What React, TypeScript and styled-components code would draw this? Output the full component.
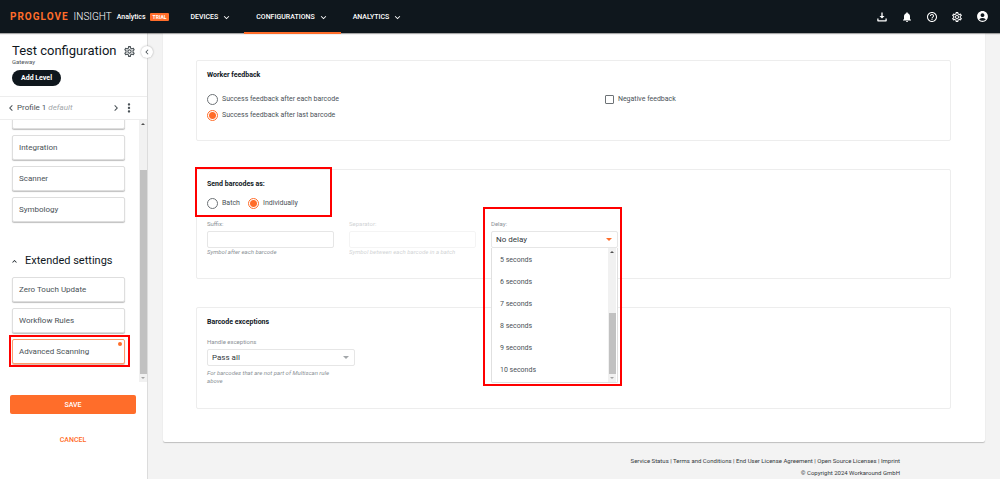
import React from 'react';
import styled, { createGlobalStyle, css } from 'styled-components';
import {
  MdAccountCircle,
  MdChevronLeft,
  MdChevronRight,
  MdExpandLess,
  MdExpandMore,
  MdHelpOutline,
  MdMoreVert,
  MdNotifications,
  MdOutlineSettings,
} from 'react-icons/md';

const ink = '#0f171d';
const text = '#4a5257';
const muted = '#8b9196';
const line = '#ededed';
const orange = '#ff6d2a';

const GlobalStyle = createGlobalStyle`
  *, *::before, *::after { box-sizing: border-box; }
  body {
    margin: 0;
    background: #f3f3f3;
    color: ${text};
    font-family: Roboto, "Liberation Sans", sans-serif;
    font-size: 7px;
    line-height: 8px;
  }
  button, input, select { font: inherit; color: inherit; margin: 0; padding: 0; border: 0; background: none; }
  h1, h2, h3, p, ul { margin: 0; padding: 0; }
  ul { list-style: none; }
  a { color: inherit; text-decoration: none; }
  svg { display: block; flex: none; }
`;

const Page = styled.div`
  display: flex;
  flex-direction: column;
  height: 100vh;
  overflow: hidden;
`;

const TopBar = styled.header`
  position: relative;
  z-index: 2;
  display: flex;
  align-items: center;
  flex: none;
  height: 33px;
  padding: 0 11px 0 10px;
  background: ${ink};
  color: #fff;
  box-shadow: 0 1px 1px rgba(0, 0, 0, 0.35);
`;

const Brand = styled.a`
  display: flex;
  align-items: center;
  font-size: 10px;
  line-height: 12px;
  font-weight: 300;
`;

const BrandName = styled.span`
  color: ${orange};
  font-weight: 700;
  letter-spacing: 1px;
  margin-right: 5px;
`;

const BrandSub = styled.span`
  font-size: 7px;
  font-weight: 500;
  margin-left: 5px;
`;

const Badge = styled.span`
  margin-left: 4px;
  padding: 0 3px;
  border-radius: 1px;
  background: ${orange};
  font-size: 5px;
  font-weight: 700;
  line-height: 8px;
`;

const Nav = styled.nav`
  display: flex;
  align-self: flex-start;
  flex: 1;
  margin-left: 9px;
`;

const NavItem = styled.button<{ $active?: boolean }>`
  display: flex;
  align-items: center;
  gap: 3px;
  height: 34px;
  padding: 0 12px;
  border-top: 2px solid transparent;
  border-bottom: 2px solid ${(p) => (p.$active ? orange : 'transparent')};
  font-weight: 500;
`;

const Tools = styled.div`
  display: flex;
  gap: 13px;
`;

const IconButton = styled.button`
  display: flex;
  align-items: center;
  justify-content: center;
`;

const Body = styled.div`
  display: flex;
  flex: 1;
  min-height: 0;
`;

const Sidebar = styled.aside`
  position: relative;
  display: flex;
  flex-direction: column;
  flex: none;
  width: 148px;
  background: #fff;
  border-right: 1px solid #dcdcdc;
`;

const Collapse = styled.button`
  position: absolute;
  top: 13px;
  right: -6px;
  display: flex;
  align-items: center;
  justify-content: center;
  width: 12px;
  height: 12px;
  border-radius: 50%;
  background: #fff;
  box-shadow: 0 0 2px rgba(0, 0, 0, 0.35);
`;

const SideHead = styled.div`
  height: 64px;
  padding: 11px 11px 0 12px;
  border-bottom: 1px solid ${line};
`;

const TitleRow = styled.div`
  display: flex;
  align-items: center;
  justify-content: space-between;
`;

const Title = styled.h1`
  color: ${ink};
  font-size: 13px;
  line-height: 14px;
  font-weight: 400;
`;

const Subtitle = styled.p`
  font-size: 6px;
`;

const Pill = styled.button`
  display: block;
  height: 16px;
  margin-top: 4px;
  padding: 0 9px;
  border-radius: 8px;
  background: ${ink};
  color: #fff;
  font-weight: 700;
`;

const ProfileRow = styled.div`
  display: flex;
  align-items: center;
  height: 23px;
  padding: 0 11px 0 5px;
  border-bottom: 1px solid ${line};
  font-size: 8px;
`;

const ProfileName = styled.span`
  flex: 1;

  em { color: #a3a7aa; }
`;

const ScrollArea = styled.div`
  display: flex;
  flex: 1;
  min-height: 0;
  overflow: hidden;
`;

const SideList = styled.div`
  display: flex;
  flex: 1;
  flex-direction: column;
  justify-content: flex-end;
  gap: 6px;
  padding: 0 14px 18px 12px;
`;

const Tile = styled.button<{ $active?: boolean }>`
  position: relative;
  flex: none;
  height: 25px;
  padding: 0 6px;
  border: 1px solid ${(p) => (p.$active ? '#ff9a6c' : '#dedede')};
  border-radius: 2px;
  background: #fff;
  box-shadow: 0 1px 1px ${(p) => (p.$active ? 'rgba(160, 80, 40, 0.4)' : 'rgba(0, 0, 0, 0.25)')};
  font-size: 8px;
  text-align: left;
`;

const Dot = styled.span`
  position: absolute;
  top: 2px;
  right: 2px;
  width: 4px;
  height: 4px;
  border-radius: 50%;
  background: ${orange};
`;

const GroupToggle = styled.button`
  display: flex;
  align-items: center;
  gap: 6px;
  flex: none;
  margin: 26px 0 3px -2px;
  color: ${ink};
  font-size: 11px;
  line-height: 14px;
`;

const Marked = styled.div<{ $inset: string; $fit?: boolean }>`
  position: relative;
  width: ${(p) => (p.$fit ? 'fit-content' : 'auto')};

  &::after {
    content: '';
    position: absolute;
    inset: ${(p) => p.$inset};
    border: 2px solid #f00;
    pointer-events: none;
    z-index: 3;
  }

  > ${Tile} { display: block; width: 100%; }
`;

const Track = styled.div`
  display: flex;
  flex-direction: column;
  flex: none;
  width: 8px;
  padding: 3px 0;
  background: #f1f1f1;
  align-items: center;
`;

const Thumb = styled.span<{ $size: number }>`
  flex: ${(p) => p.$size} 0 0;
  width: 7px;
  background: #c1c1c1;
`;

const Space = styled.span<{ $grow: number }>`
  flex: ${(p) => p.$grow} 0 0;
`;

const Actions = styled.div`
  display: flex;
  flex-direction: column;
  flex: none;
  gap: 16px;
  height: 97px;
  padding: 13px 11px 0 10px;
`;

const ActionButton = styled.button<{ $primary?: boolean }>`
  height: 19px;
  border-radius: 2px;
  font-weight: 500;
  color: ${(p) => (p.$primary ? '#fff' : orange)};
  background: ${(p) => (p.$primary ? orange : 'transparent')};
`;

const Main = styled.main`
  flex: 1;
  min-width: 0;
  padding: 0 15px;
`;

const Sheet = styled.div`
  display: flex;
  flex-direction: column;
  gap: 28px;
  padding: 27px 34px 33px 33px;
  background: #fff;
  border-radius: 0 0 2px 2px;
  box-shadow: 0 1px 1px rgba(0, 0, 0, 0.22);
`;

const Section = styled.section<{ $height: number }>`
  min-height: ${(p) => p.$height}px;
  padding: 9px 10px;
  border: 1px solid ${line};
  border-radius: 2px;
`;

const SectionTitle = styled.h2`
  color: ${ink};
  font-size: 7px;
  line-height: 10px;
  font-weight: 700;
`;

const Split = styled.div`
  display: grid;
  grid-template-columns: 19fr 16fr;
  align-items: start;
  margin-top: 13px;
`;

const Choices = styled.div<{ $row?: boolean }>`
  display: flex;
  flex-direction: ${(p) => (p.$row ? 'row' : 'column')};
  gap: ${(p) => (p.$row ? 8 : 4)}px;
  margin-top: ${(p) => (p.$row ? 8 : 0)}px;
`;

const Choice = styled.label`
  display: flex;
  align-items: center;
  gap: 4px;
  height: 12px;
`;

const Radio = styled.input.attrs({ type: 'radio' })`
  appearance: none;
  width: 11px;
  height: 11px;
  border: 1px solid #6d7276;
  border-radius: 50%;

  &:checked {
    border-color: ${orange};
    background: radial-gradient(circle, ${orange} 0 3px, transparent 4px);
  }
`;

const Checkbox = styled.input.attrs({ type: 'checkbox' })`
  appearance: none;
  width: 9px;
  height: 9px;
  border: 1px solid #6d7276;
  border-radius: 1px;
`;

const Fields = styled.div`
  display: flex;
  gap: 15px;
  margin-top: 11px;
`;

const Field = styled.div<{ $wide?: boolean; $faded?: boolean }>`
  position: relative;
  width: ${(p) => (p.$wide ? 148 : 127)}px;
  opacity: ${(p) => (p.$faded ? 0.4 : 1)};
`;

const FieldLabel = styled.label`
  display: block;
  margin-bottom: 3px;
  color: ${muted};
  font-size: 6px;
`;

const box = css`
  display: block;
  width: 100%;
  height: 17px;
  border: 1px solid #e6e6e6;
  border-radius: 2px;
  background: #fff;
`;

const TextBox = styled.input`
  ${box}
  padding: 0 4px;
`;

const SelectWrap = styled.div`
  position: relative;

  svg { position: absolute; top: 7px; right: 6px; pointer-events: none; }
`;

const Select = styled.select`
  ${box}
  appearance: none;
  padding: 0 4px;
  color: #33393d;
  font-size: 8px;
`;

const Hint = styled.p<{ $below?: boolean }>`
  margin-top: ${(p) => (p.$below ? 3 : 0)}px;
  padding-right: ${(p) => (p.$below ? 14 : 0)}px;
  color: ${muted};
  font-size: 6px;
  font-style: italic;
`;

const Menu = styled.div`
  position: absolute;
  top: 100%;
  left: 0;
  right: 0;
  z-index: 2;
  display: flex;
  height: 135px;
  padding-right: 1px;
  border: 1px solid #e0e0e0;
  border-top: 0;
  border-radius: 0 0 2px 2px;
  background: #fff;
`;

const MenuList = styled.ul`
  flex: 1;
  padding-top: 1px;
`;

const MenuItem = styled.li`
  padding: 0 8px;
  line-height: 22px;
`;

const Footer = styled.footer`
  padding: 13px 85px 0 0;
  color: #33393d;
  font-size: 6px;
  line-height: 12px;
  text-align: right;
`;

const Arrow = ({ up, color, width = 4 }: { up?: boolean; color: string; width?: number }) => (
  <svg width={width} height={width / 2} viewBox="0 0 4 2" fill={color}>
    <path d={up ? 'M0 2L2 0L4 2Z' : 'M0 0L2 2L4 0Z'} />
  </svg>
);

const ScrollBar = ({ before, size, after }: { before: number; size: number; after: number }) => (
  <Track aria-hidden="true">
    <Arrow up color="#505050" />
    <Space $grow={before} />
    <Thumb $size={size} />
    <Space $grow={after} />
    <Arrow color="#a3a3a3" />
  </Track>
);

const DownloadIcon = () => (
  <svg width="12" height="12" viewBox="0 0 24 24" fill="currentColor">
    <path d="M10.700 3h2.600v7H17l-5 5-5-5h3.700ZM2.500 15h2.600v3.400h13.800V15h2.600v4.500a1.500 1.500 0 0 1-1.500 1.500H4a1.500 1.500 0 0 1-1.500-1.500Z" />
  </svg>
);

const navItems = ['DEVICES', 'CONFIGURATIONS', 'ANALYTICS'];
const basicTiles = ['Gateway', 'Integration', 'Scanner', 'Symbology'];
const extendedTiles = ['Zero Touch Update', 'Workflow Rules'];
const delays = [5, 6, 7, 8, 9, 10];
const legalLinks = [
  'Service Status',
  'Terms and Conditions',
  'End User License Agreement',
  'Open Source Licenses',
  'Imprint',
];

export default function App() {
  return (
    <>
      <GlobalStyle />
      <Page>
        <TopBar>
          <Brand href="#">
            <BrandName>PROGLOVE</BrandName>
            <span>INSIGHT</span>
            <BrandSub>Analytics</BrandSub>
            <Badge>TRIAL</Badge>
          </Brand>
          <Nav>
            {navItems.map((item) => (
              <NavItem key={item} $active={item === 'CONFIGURATIONS'}>
                {item}
                <MdExpandMore size={11} />
              </NavItem>
            ))}
          </Nav>
          <Tools>
            <IconButton aria-label="Downloads"><DownloadIcon /></IconButton>
            <IconButton aria-label="Notifications"><MdNotifications size={12} /></IconButton>
            <IconButton aria-label="Help"><MdHelpOutline size={12} /></IconButton>
            <IconButton aria-label="Settings"><MdOutlineSettings size={12} /></IconButton>
            <IconButton aria-label="Account"><MdAccountCircle size={13} /></IconButton>
          </Tools>
        </TopBar>
        <Body>
          <Sidebar>
            <Collapse aria-label="Collapse sidebar"><MdChevronLeft size={10} /></Collapse>
            <SideHead>
              <TitleRow>
                <Title>Test configuration</Title>
                <IconButton aria-label="Configuration settings"><MdOutlineSettings size={13} /></IconButton>
              </TitleRow>
              <Subtitle>Gateway</Subtitle>
              <Pill>Add Level</Pill>
            </SideHead>
            <ProfileRow>
              <IconButton aria-label="Previous profile"><MdChevronLeft size={12} /></IconButton>
              <ProfileName>Profile 1 <em>default</em></ProfileName>
              <IconButton aria-label="Next profile"><MdChevronRight size={12} /></IconButton>
              <IconButton aria-label="Profile menu"><MdMoreVert size={14} /></IconButton>
            </ProfileRow>
            <ScrollArea>
              <SideList>
                {basicTiles.map((tile) => <Tile key={tile}>{tile}</Tile>)}
                <GroupToggle aria-expanded="true">
                  <MdExpandLess size={9} />
                  Extended settings
                </GroupToggle>
                {extendedTiles.map((tile) => <Tile key={tile}>{tile}</Tile>)}
                <Marked $inset="-4px -5px -3px -3px">
                  <Tile $active>Advanced Scanning<Dot /></Tile>
                </Marked>
              </SideList>
              <ScrollBar before={45} size={203} after={3} />
            </ScrollArea>
            <Actions>
              <ActionButton $primary>SAVE</ActionButton>
              <ActionButton>CANCEL</ActionButton>
            </Actions>
          </Sidebar>
          <Main>
            <Sheet>
              <Section $height={81}>
                <SectionTitle>Worker feedback</SectionTitle>
                <Split>
                  <Choices>
                    <Choice><Radio name="feedback" />Success feedback after each barcode</Choice>
                    <Choice><Radio name="feedback" defaultChecked />Success feedback after last barcode</Choice>
                  </Choices>
                  <Choice><Checkbox />Negative feedback</Choice>
                </Split>
              </Section>
              <Section $height={110}>
                <Marked $fit $inset="-12px -34px -8px -12px">
                  <SectionTitle>Send barcodes as:</SectionTitle>
                  <Choices $row>
                    <Choice><Radio name="mode" />Batch</Choice>
                    <Choice><Radio name="mode" defaultChecked />Individually</Choice>
                  </Choices>
                </Marked>
                <Fields>
                  <Field>
                    <FieldLabel htmlFor="suffix">Suffix:</FieldLabel>
                    <TextBox id="suffix" />
                    <Hint>Symbol after each barcode</Hint>
                  </Field>
                  <Field $faded>
                    <FieldLabel htmlFor="separator">Separator:</FieldLabel>
                    <TextBox id="separator" disabled />
                    <Hint>Symbol between each barcode in a batch</Hint>
                  </Field>
                  <Marked $inset="-13px -4px -130px -8px">
                    <Field>
                      <FieldLabel htmlFor="delay">Delay:</FieldLabel>
                      <SelectWrap>
                        <Select id="delay"><option>No delay</option></Select>
                        <Arrow color={orange} width={6} />
                      </SelectWrap>
                      <Menu>
                        <MenuList role="listbox" aria-label="Delay">
                          {delays.map((n) => <MenuItem role="option" key={n}>{n} seconds</MenuItem>)}
                        </MenuList>
                        <ScrollBar before={60} size={60} after={3} />
                      </Menu>
                    </Field>
                  </Marked>
                </Fields>
              </Section>
              <Section $height={102}>
                <SectionTitle>Barcode exceptions</SectionTitle>
                <Fields>
                  <Field $wide>
                    <FieldLabel htmlFor="exceptions">Handle exceptions</FieldLabel>
                    <SelectWrap>
                      <Select id="exceptions"><option>Pass all</option></Select>
                      <Arrow color="#a3a7aa" width={6} />
                    </SelectWrap>
                    <Hint $below>For barcodes that are not part of Multiscan rule above</Hint>
                  </Field>
                </Fields>
              </Section>
            </Sheet>
            <Footer>
              <p>
                {legalLinks.map((label, i) => (
                  <React.Fragment key={label}>
                    {i > 0 && ' | '}
                    <a href="#">{label}</a>
                  </React.Fragment>
                ))}
              </p>
              <p>© Copyright 2024 Workaround GmbH</p>
            </Footer>
          </Main>
        </Body>
      </Page>
    </>
  );
}
